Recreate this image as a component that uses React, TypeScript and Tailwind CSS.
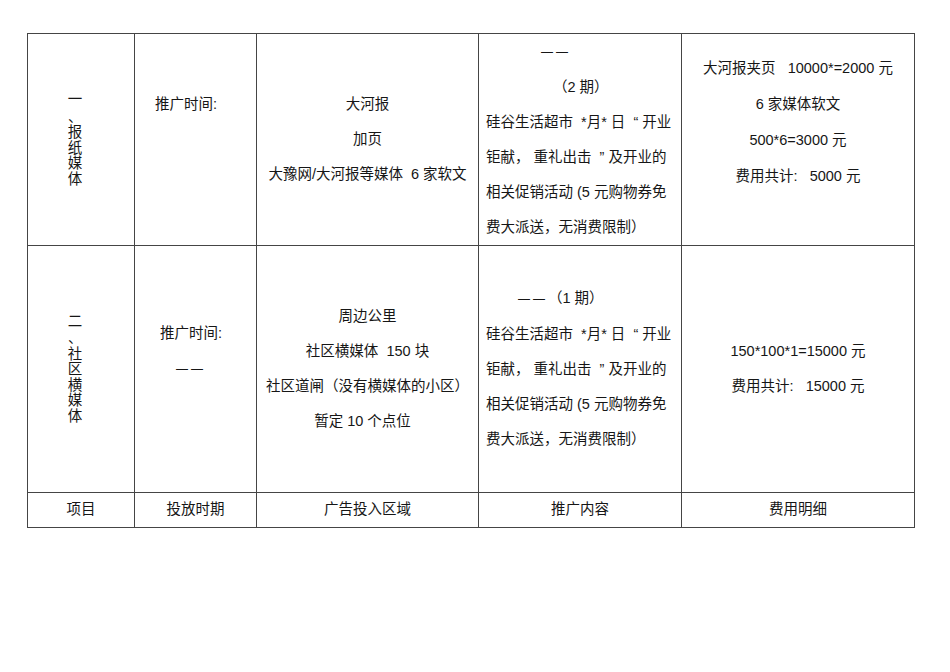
import React from 'react';

const font = "font-['Liberation_Sans','Noto_Sans_CJK_SC',sans-serif]";

// one vertical label (一、报纸媒体)
const VLabel: React.FC<{ head: string; chars: string[] }> = ({ head, chars }) => (
  <div className="flex flex-col items-center pr-[12px] leading-[15.5px]">
    <div className="mb-[2px]">{head}</div>
    <div className="w-[14px] text-left">、</div>
    {chars.map((c, i) => (
      <div key={i}>{c}</div>
    ))}
  </div>
);

const Dash: React.FC = () => (
  <span className="text-[12px] tracking-[3px]">——</span>
);

// the promo text repeated in both rows
const Promo: React.FC = () => (
  <>
    <div>硅谷生活超市&nbsp;&nbsp;*月*&nbsp;日&nbsp;&nbsp;“&nbsp;开业</div>
    <div>钜献，&nbsp;重礼出击&nbsp;&nbsp;”&nbsp;及开业的</div>
    <div>相关促销活动 (5 元购物券免</div>
    <div>费大派送，无消费限制）</div>
  </>
);

const cell = 'border border-[#454545] align-middle p-0';

export default function App() {
  return (
    <div className={`w-[950px] h-[672px] bg-white pt-[33px] pl-[27px] text-[14.5px] text-[#161616] ${font}`}>
      <table className="table-fixed border-collapse w-[887px]">
        <colgroup>
          <col className="w-[107px]" />
          <col className="w-[122px]" />
          <col className="w-[222px]" />
          <col className="w-[203px]" />
          <col className="w-[233px]" />
        </colgroup>
        <tbody>
          {/* 报纸媒体 */}
          <tr className="h-[212px]">
            <td className={cell}>
              <VLabel head="一" chars={['报', '纸', '媒', '体']} />
            </td>
            <td className={cell}>
              <div className="text-center pr-[19px] leading-[35px]">
                <div>推广时间:</div>
                <div>&nbsp;</div>
                <div>&nbsp;</div>
              </div>
            </td>
            <td className={cell}>
              <div className="text-center leading-[35px]">
                <div>大河报</div>
                <div>加页</div>
                <div>大豫网/大河报等媒体&nbsp;&nbsp;6 家软文</div>
              </div>
            </td>
            <td className={cell}>
              <div className="pl-[7px] leading-[35px] whitespace-nowrap">
                <div className="pl-[55px]"><Dash /></div>
                <div className="pl-[67px]">（2 期）</div>
                <Promo />
              </div>
            </td>
            <td className={cell}>
              <div className="text-center leading-[36px]">
                <div>大河报夹页&nbsp;&nbsp;&nbsp;10000*=2000 元</div>
                <div>6 家媒体软文</div>
                <div>500*6=3000 元</div>
                <div>费用共计:&nbsp;&nbsp;&nbsp;5000 元</div>
                <div>&nbsp;</div>
              </div>
            </td>
          </tr>

          {/* 社区横媒体 */}
          <tr className="h-[247px]">
            <td className={cell}>
              <VLabel head="二" chars={['社', '区', '横', '媒', '体']} />
            </td>
            <td className={cell}>
              <div className="text-center pr-[9px] leading-[35px]">
                <div>推广时间:</div>
                <div><Dash /></div>
                <div>&nbsp;</div>
              </div>
            </td>
            <td className={cell}>
              <div className="text-center leading-[35px]">
                <div>周边公里</div>
                <div>社区横媒体&nbsp;&nbsp;150 块</div>
                <div>社区道闸（没有横媒体的小区）</div>
                <div className="pr-[10px]">暂定 10 个点位</div>
              </div>
            </td>
            <td className={cell}>
              <div className="pl-[7px] leading-[35px] whitespace-nowrap">
                <div className="pl-[32px]"><Dash />（1 期）</div>
                <Promo />
              </div>
            </td>
            <td className={cell}>
              <div className="text-center leading-[35px]">
                <div>150*100*1=15000 元</div>
                <div>费用共计:&nbsp;&nbsp;&nbsp;15000 元</div>
              </div>
            </td>
          </tr>

          {/* header */}
          <tr className="h-[35px]">
            <td className={`${cell} text-center`}>项目</td>
            <td className={`${cell} text-center`}>投放时期</td>
            <td className={`${cell} text-center`}>广告投入区域</td>
            <td className={`${cell} text-center`}>推广内容</td>
            <td className={`${cell} text-center`}>费用明细</td>
          </tr>
        </tbody>
      </table>
    </div>
  );
}
